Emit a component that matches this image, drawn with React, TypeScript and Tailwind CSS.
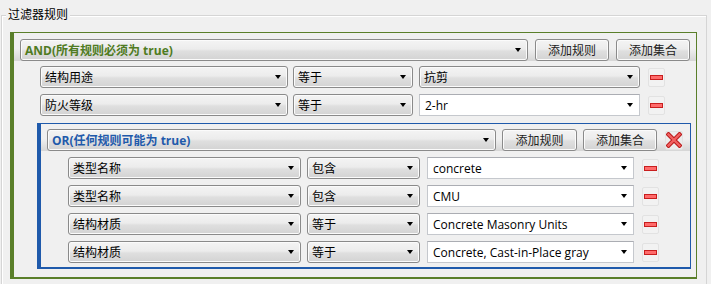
import React from "react";

const FONT = "font-['Open_Sans','Noto_Sans_CJK_SC',sans-serif]";

const Arrow = () => (
  <span className="ml-auto mr-[6px] w-0 h-0 border-l-[3.5px] border-r-[3.5px] border-t-[4px] border-l-transparent border-r-transparent border-t-black shrink-0" />
);

const Select = ({ w, text, bold, color }: { w: string; text: string; bold?: boolean; color?: string }) => (
  <div
    className={`${w} h-[22px] shrink-0 flex items-center rounded-[3px] border border-[#8a8a8a] bg-[linear-gradient(#f4f4f4,#ececec_45%,#dfdfdf_55%,#d3d3d3)] shadow-[inset_0_0_0_1px_#fbfbfb] pl-[4px] text-[12px] leading-[18px] ${bold ? "font-bold" : ""} ${color ?? "text-black"}`}
  >
    <span className="whitespace-nowrap pt-[1px]">{text}</span>
    <Arrow />
  </div>
);

const Combo = ({ w, text }: { w: string; text: string }) => (
  <div
    className={`${w} h-[22px] shrink-0 flex items-center border border-[#c5c8cd] border-t-[#abadb3] bg-white pl-[5px] text-[12px] leading-[18px] text-black`}
  >
    <span className="whitespace-nowrap pt-[1px]">{text}</span>
    <Arrow />
  </div>
);

const Btn = ({ w, text }: { w: string; text: string }) => (
  <div
    className={`${w} h-[22px] shrink-0 flex items-center justify-center rounded-[3px] border border-[#8a8a8a] bg-[linear-gradient(#f4f4f4,#ececec_45%,#dfdfdf_55%,#d3d3d3)] shadow-[inset_0_0_0_1px_#fbfbfb] text-[12px] leading-[18px] text-[#222]`}
  >
    <span className="whitespace-nowrap pt-[1px]">{text}</span>
  </div>
);

const Minus = () => (
  <div className="w-[17px] h-[19px] shrink-0 flex items-center justify-center rounded-[2px] border border-[#e2e2e2] bg-[#f2f2f2]">
    <div className="w-[13px] h-[5px] bg-[#ff6b6b] border border-[#c81e1e]" />
  </div>
);

const XBtn = () => (
  <div className="w-[18px] h-[19px] shrink-0 flex items-center justify-center rounded-[2px] border border-[#e2e2e2] bg-[#ececec]">
    <svg width="16" height="16" viewBox="0 0 16 16">
      <path d="M2.5 2.5 L13.5 13.5 M13.5 2.5 L2.5 13.5" stroke="#b81818" strokeWidth="4.4" strokeLinecap="square" />
      <path d="M2.5 2.5 L13.5 13.5 M13.5 2.5 L2.5 13.5" stroke="#f26060" strokeWidth="2.4" strokeLinecap="square" />
    </svg>
  </div>
);

const headerBg = "bg-[linear-gradient(to_bottom,#f0f0f0_0%,#f0f0f0_55%,#e4e4e4_75%,#d6d6d6_100%)]";

export default function App() {
  return (
    <div className={`w-[711px] h-[284px] overflow-hidden bg-[#f0f0f0] ${FONT}`}>
      <div className="relative ml-[1px] mt-[15px] w-[706px] h-[300px] border border-[#d5d5d5] shadow-[inset_1px_1px_0_#ffffff]">
        <div className="absolute left-[4px] top-[-9px] bg-[#f0f0f0] px-[2px] text-[12px] leading-[16px] text-black whitespace-nowrap">
          过滤器规则
        </div>

        {/* AND group */}
        <div className="ml-[8px] mt-[16px] w-[687px] border-l-[4px] border-t border-r border-b-[2px] border-[#5a7f2a] pb-[8px] flex flex-col">
          <div className={`flex items-center gap-[7px] pl-[6px] pt-[6px] ${headerBg}`}>
            <Select w="w-[508px]" text="AND(所有规则必须为 true)" bold color="text-[#4f7b22]" />
            <Btn w="w-[74px]" text="添加规则" />
            <Btn w="w-[74px]" text="添加集合" />
          </div>

          <div className="mt-[5px] pl-[26px] flex flex-col gap-[6px]">
            <div className="flex items-center">
              <Select w="w-[248px]" text="结构用途" />
              <div className="w-[5px]" />
              <Select w="w-[120px]" text="等于" />
              <div className="w-[6px]" />
              <Select w="w-[221px]" text="抗剪" />
              <div className="w-[8px]" />
              <Minus />
            </div>
            <div className="flex items-center">
              <Select w="w-[248px]" text="防火等级" />
              <div className="w-[5px]" />
              <Select w="w-[120px]" text="等于" />
              <div className="w-[6px]" />
              <Combo w="w-[221px]" text="2-hr" />
              <div className="w-[8px]" />
              <Minus />
            </div>
          </div>

          {/* OR group */}
          <div className="ml-[23px] mt-[7px] w-[654px] border-l-[4px] border-t border-r border-b-[2px] border-[#1f5aab] pb-[4px] flex flex-col">
            <div className={`flex items-center pl-[6px] pt-[5px] ${headerBg}`}>
              <Select w="w-[449px]" text="OR(任何规则可能为 true)" bold color="text-[#1f5aab]" />
              <div className="w-[6px]" />
              <Btn w="w-[75px]" text="添加规则" />
              <div className="w-[6px]" />
              <Btn w="w-[74px]" text="添加集合" />
              <div className="w-[8px]" />
              <XBtn />
            </div>

            <div className="mt-[6px] pl-[27px] flex flex-col gap-[6px]">
              {[
                ["类型名称", "包含", "concrete"],
                ["类型名称", "包含", "CMU"],
                ["结构材质", "等于", "Concrete Masonry Units"],
                ["结构材质", "等于", "Concrete, Cast-in-Place gray"],
              ].map(([a, b, c], i) => (
                <div key={i} className="flex items-center">
                  <Select w="w-[233px]" text={a} />
                  <div className="w-[6px]" />
                  <Select w="w-[113px]" text={b} />
                  <div className="w-[7px]" />
                  <Combo w="w-[207px]" text={c} />
                  <div className="w-[8px]" />
                  <Minus />
                </div>
              ))}
            </div>
          </div>
        </div>
      </div>
    </div>
  );
}
